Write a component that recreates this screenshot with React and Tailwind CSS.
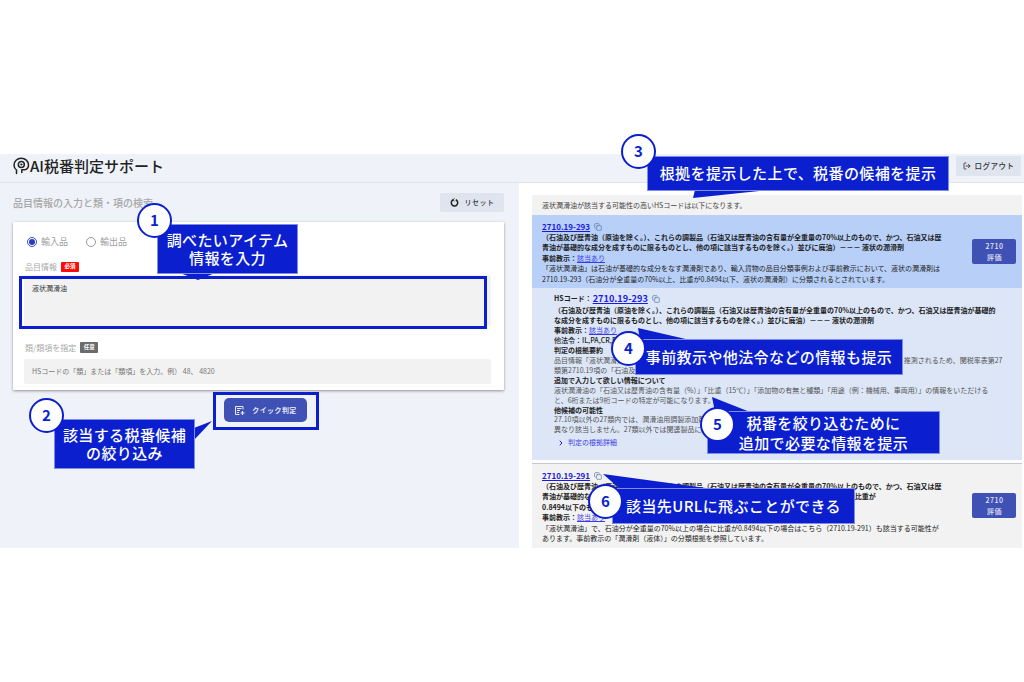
import React from "react";
import { Copy, LogOut, ChevronRight } from "lucide-react";

const FONT = "[font-family:'Noto_Sans_CJK_JP','Noto_Sans',sans-serif]";

function Circle({ n, className }) {
  return (
    <div className={"absolute z-20 w-[35px] h-[35px] rounded-full bg-white border-[2.5px] border-[#0b1fcf] flex items-center justify-center text-[#0b1fcf] text-[15px] font-bold " + className}>
      {n}
    </div>
  );
}

function Box({ className, children }) {
  return (
    <div className={"absolute z-10 bg-[#0b1fcf] border border-[#7f8ce8] text-white font-medium flex flex-col items-center justify-center text-[15px] tracking-[0.4px] " + className}>
      {children}
    </div>
  );
}

function Tail({ points }) {
  return (
    <svg className="absolute left-0 top-0 z-10 pointer-events-none" width="1024" height="682">
      <polygon points={points} fill="#0b1fcf" />
    </svg>
  );
}

function Code({ children }) {
  return (
    <div className="flex items-center gap-[4px] h-[11px]">
      <a className="text-[8px] font-bold text-[#1a1ae0] underline leading-[11px]">{children}</a>
      <Copy size={8} className="text-[#55719c]" strokeWidth={2} />
    </div>
  );
}

function EvalBtn() {
  return (
    <button className="w-[44px] h-[25px] shrink-0 bg-[#3f51b5] rounded-[2px] text-[#e4e7f6] text-[7px] font-medium leading-[10.5px] flex flex-col items-center justify-center tracking-[0.5px]">
      <span>2710</span>
      <span>評価</span>
    </button>
  );
}

function Link({ children }) {
  return <a className="text-[#3a3ae6] underline font-normal">{children}</a>;
}

function Left() {
  return (
    <div className="w-[519px] shrink-0 bg-[#eff2f8] pl-[13px] pr-[15px] pt-[10px]">
      <div className="flex items-center justify-between h-[19px]">
        <span className="text-[10px] text-[#a8a8a8] font-medium">品目情報の入力と類・項の検索</span>
        <button className="w-[64px] h-[19px] bg-[#dfe5ee] rounded-[2px] flex items-center justify-center gap-[6px] text-[7px] text-[#333] font-medium tracking-[0.5px]">
          <svg width="9" height="9" viewBox="0 0 9 9" fill="none" stroke="#222" strokeWidth="1.500">
            <path d="M3.200 1.800A3.200 3.200 0 1 0 5.800 1.800" />
            <path d="M4.600 0.300L3 1.800L4.600 3.100" strokeWidth="0.900" />
          </svg>
          リセット
        </button>
      </div>
      <div className="mt-[10px] w-[491px] h-[168px] bg-white rounded-[1px] shadow-[0_1px_3px_rgba(0,0,0,0.4)] pl-[11px] pr-[13px] pt-[14px]">
        <div className="flex items-center h-[12px] pl-[3px] text-[9px] text-[#a0a0a0]">
          <span className="w-[10px] h-[10px] rounded-full border border-[#3f51b5] flex items-center justify-center">
            <span className="w-[6px] h-[6px] rounded-full bg-[#2a3cc7]" />
          </span>
          <span className="ml-[4px]">輸入品</span>
          <span className="ml-[18px] w-[10px] h-[10px] rounded-full border border-[#9a9a9a]" />
          <span className="ml-[4px]">輸出品</span>
        </div>
        <div className="mt-[13px] flex items-center h-[11px] text-[8px] text-[#a8a8a8] pl-[1px]">
          品目情報
          <span className="ml-[4px] w-[18px] h-[10px] bg-[#ff0a0a] rounded-[1px] text-white text-[5.500px] font-bold flex items-center justify-center">必須</span>
        </div>
        <div className="mt-[3px] h-[51px] bg-[#f2f2f2] rounded-[2px] pl-[8px] pt-[7px] text-[7px] leading-[12px] text-[#333]">液状潤滑油</div>
        <div className="mt-[16px] flex items-center h-[11px] text-[8px] text-[#a8a8a8] pl-[1px]">
          類/類項を指定
          <span className="ml-[4px] w-[18px] h-[11px] bg-[#6b6b6b] rounded-[1px] text-white text-[5.500px] font-bold flex items-center justify-center">任意</span>
        </div>
        <div className="mt-[6px] h-[25px] bg-[#f2f2f2] rounded-[2px] pl-[8px] flex items-center text-[7px] text-[#777]">
          HSコードの「類」または「類項」を入力。例） 48、 4820
        </div>
      </div>
      <div className="mt-[8px] pl-[211px]">
        <button className="w-[83px] h-[24px] bg-[#3f51b5] rounded-[5px] text-[#e8ebf8] text-[7px] font-bold flex items-center justify-center gap-[7px] tracking-[0.4px]">
          <svg width="11" height="11" viewBox="0 0 11 11" fill="none" stroke="#e8ebf8" strokeWidth="1">
            <path d="M9 4.500V1.500H1.500V9.500H5.500" />
            <path d="M3 3.500H7.500M3 5.500H6M3 7.500H5" />
            <path d="M8.500 6V10M6.500 8H10.500" strokeWidth="1.200" />
          </svg>
          クイック判定
        </button>
      </div>
    </div>
  );
}

function Right() {
  return (
    <div className="flex-1 bg-white pl-[13px] pr-[2px] pt-[12px] text-[7px] leading-[10.400px] text-[#222]">
      <div className="h-[20px] bg-[#f2f2f2] flex items-center pl-[10px] text-[#444]">液状潤滑油が該当する可能性の高いHSコードは以下になります。</div>
      <div className="h-[73px] bg-[#b8d0f8] pl-[10px] pr-[6px] pt-[6px] flex items-start">
        <div className="w-[420px] shrink-0">
          <Code>2710.19-293</Code>
          <div className="font-bold">（石油及び歴青油（原油を除く。）、これらの調製品（石油又は歴青油の含有量が全重量の70%以上のもので、かつ、石油又は歴</div>
          <div className="font-bold">青油が基礎的な成分を成すものに限るものとし、他の項に該当するものを除く。）並びに廃油）－－－ 液状の潤滑剤</div>
          <div className="font-bold">事前教示：<Link>該当あり</Link></div>
          <div>「液状潤滑油」は石油が基礎的な成分をなす潤滑剤であり、輸入貨物の品目分類事例および事前教示において、液状の潤滑剤は</div>
          <div>2710.19-293（石油分が全重量の70%以上、比重が0.8494以下、液状の潤滑剤）に分類されるとされています。</div>
        </div>
        <div className="flex-1" />
        <div className="mt-[18px]"><EvalBtn /></div>
      </div>
      <div className="h-[172px] bg-[#dce6f7] pl-[22px] pr-[20px] pt-[5px] leading-[9.950px] whitespace-nowrap">
        <div className="flex items-center gap-[4px] h-[12px] font-bold">
          <span>HSコード：</span>
          <a className="text-[9.200px] font-bold text-[#1a1ae0] underline -ml-[3px]">2710.19-293</a>
          <Copy size={8} className="text-[#55719c]" strokeWidth={2} />
        </div>
        <div className="font-bold mt-[1px]">（石油及び歴青油（原油を除く。）、これらの調製品（石油又は歴青油の含有量が全重量の70%以上のもので、かつ、石油又は歴青油が基礎的</div>
        <div className="font-bold">な成分を成すものに限るものとし、他の項に該当するものを除く。）並びに廃油）－－－ 液状の潤滑剤</div>
        <div className="font-bold">事前教示：<Link>該当あり</Link></div>
        <div className="font-medium">他法令：IL,PA,CR,FA</div>
        <div className="font-bold">判定の根拠要約</div>
        <div className="text-[#555]">品目情報「液状潤滑油」は、石油を基礎成分とする液状の潤滑剤であり、石油分が全重量の70%以上を占めると推測されるため、関税率表第27</div>
        <div className="text-[#555]">類第2710.19項の「石油及び歴青油」のうち、液状の潤滑剤に該当すると判断しました。</div>
        <div className="font-bold">追加で入力して欲しい情報について</div>
        <div className="text-[#555]">液状潤滑油の「石油又は歴青油の含有量（%）」「比重（15℃）」「添加物の有無と種類」「用途（例：機械用、車両用）」の情報をいただける</div>
        <div className="text-[#555]">と、6桁または9桁コードの特定が可能になります。</div>
        <div className="font-bold">他候補の可能性</div>
        <div className="text-[#555]">27.10項以外の27類内では、潤滑油用調製添加剤などが候補となる可能性がありますが、これらは成分や用途が</div>
        <div className="text-[#555]">異なり該当しません。27類以外では関連製品に該当する可能性は低いと考えられます。</div>
        <div className="flex items-center gap-[3px] mt-[3px] pl-[3px] text-[#3a3ae6]">
          <ChevronRight size={8} strokeWidth={3} className="text-[#1a1ae0]" />
          判定の根拠詳細
        </div>
      </div>
      <div className="h-[3px] bg-white" />
      <div className="h-[85px] bg-[#f2f2f2] border-t border-[#c4c8d0] pl-[10px] pr-[6px] pt-[6px] flex items-start">
        <div className="w-[420px] shrink-0">
          <Code>2710.19-291</Code>
          <div className="font-bold">（石油及び歴青油（原油を除く。）、これらの調製品（石油又は歴青油の含有量が全重量の70%以上のもので、かつ、石油又は歴</div>
          <div className="font-bold">青油が基礎的な成分を成すものに限るものとし、他の項に該当するものを除く。）温度15度における比重が</div>
          <div className="font-bold">0.8494以下のものに限る。</div>
          <div className="font-bold">事前教示：<Link>該当あり</Link></div>
          <div>「液状潤滑油」で、石油分が全重量の70%以上の場合に比重が0.8494以下の場合はこちら（2710.19-291）も該当する可能性が</div>
          <div>あります。事前教示の「潤滑剤（液体）」の分類根拠を参照しています。</div>
        </div>
        <div className="flex-1" />
        <div className="mt-[23px]"><EvalBtn /></div>
      </div>
    </div>
  );
}

export default function App() {
  return (
    <div className={"relative w-[1024px] h-[682px] bg-white overflow-hidden " + FONT}>
      <div className="h-[154px]" />
      <div className="h-[394px] flex flex-col">
        <header className="h-[29px] shrink-0 bg-[#eff2f8] border-b border-[#dfe3ea] flex items-center justify-between pl-[13px] pr-[3px]">
          <div className="flex items-center text-[15px] font-medium text-[#222] mb-[4px] leading-[20px]">
            <svg width="17" height="18" viewBox="0 0 17 18" fill="none" stroke="#222" strokeWidth="1.500" strokeLinecap="round" strokeLinejoin="round">
              <path d="M3.500 16.500V13C1.800 11.800 1 10 1 8 1 4.200 4.200 1.200 8.200 1.200S15.500 4.200 15.500 8C15.500 10.500 13.800 12.500 11.500 12.800H8.800V15.500" />
              <circle cx="8.300" cy="7.500" r="3" />
              <circle cx="8.300" cy="7.500" r="0.800" fill="#222" strokeWidth="0.500" />
            </svg>
            <span>AI税番判定サポート</span>
          </div>
          <button className="w-[65px] h-[20px] mb-[5px] bg-[#dfe5ee] rounded-[2px] flex items-center justify-center gap-[4px] text-[7.500px] text-[#333] font-medium tracking-[0.5px]">
            <LogOut size={8} strokeWidth={2.500} />
            ログアウト
          </button>
        </header>
        <div className="flex-1 flex min-h-0 overflow-hidden">
          <Left />
          <Right />
        </div>
      </div>

      <div className="absolute z-10 left-[19px] top-[276px] w-[468px] h-[53px] border-[3px] border-[#0b1fcf]" />
      <div className="absolute z-10 left-[213px] top-[392px] w-[106px] h-[38px] border-[3px] border-[#0b1fcf]" />

      <Tail points="180,273 198,280 215,273" />
      <Box className="left-[157px] top-[224px] w-[141px] h-[50px] leading-[18px]">
        <span>調べたいアイテム</span>
        <span>情報を入力</span>
      </Box>
      <Circle n="1" className="left-[137px] top-[203px]" />

      <Tail points="194,428 212,421 194,440" />
      <Box className="left-[54px] top-[419px] w-[141px] h-[50px] leading-[18px]">
        <span>該当する税番候補</span>
        <span>の絞り込み</span>
      </Box>
      <Circle n="2" className="left-[29px] top-[398px]" />

      <Tail points="695,190 693,198 770,190" />
      <Box className="left-[647px] top-[156px] w-[302px] h-[35px]">
        <span>根拠を提示した上で、税番の候補を提示</span>
      </Box>
      <Circle n="3" className="left-[621px] top-[134px]" />

      <Tail points="638,328 690,340 640,340" />
      <Box className="left-[635px] top-[339px] w-[268px] h-[36px]">
        <span>事前教示や他法令などの情報も提示</span>
      </Box>
      <Circle n="4" className="left-[611px] top-[331px]" />

      <Tail points="712,397 750,412 715,412" />
      <Box className="left-[707px] top-[411px] w-[233px] h-[43px] leading-[20px]">
        <span>税番を絞り込むために</span>
        <span>追加で必要な情報を提示</span>
      </Box>
      <Circle n="5" className="left-[700px] top-[407px]" />

      <Tail points="603,474 713,489 620,489" />
      <Box className="left-[612px] top-[488px] w-[243px] h-[36px]">
        <span>該当先URLに飛ぶことができる</span>
      </Box>
      <Circle n="6" className="left-[588px] top-[484px]" />
    </div>
  );
}
